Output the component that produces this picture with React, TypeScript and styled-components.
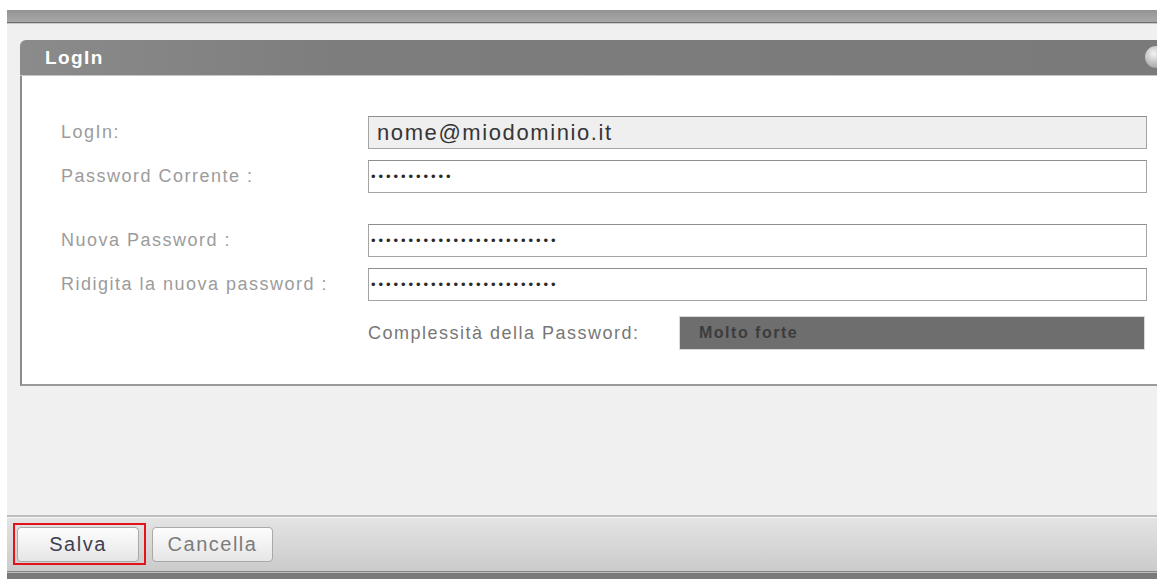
import styled, { createGlobalStyle } from 'styled-components';

const GlobalStyle = createGlobalStyle`
  html, body {
    margin: 0;
    padding: 0;
    background: #fff;
    overflow: hidden;
  }
  body {
    font-family: "Liberation Sans", Arial, sans-serif;
  }
`;

const Page = styled.div`
  width: 1157px;
  height: 579px;
  padding: 10px 0 0 7px;
  box-sizing: border-box;
  background: #fff;
  overflow: hidden;
`;

const Window = styled.div`
  height: 100%;
  display: flex;
  flex-direction: column;
  background: #f0f0f0;
`;

const TitleStrip = styled.div`
  height: 12px;
  flex-shrink: 0;
  background: linear-gradient(#949494, #a8a8a8);
  border-bottom: 1px solid #6f6f6f;
  box-shadow: 0 1px 0 #c9c9c9;
`;

const Content = styled.div`
  flex: 1;
  padding: 17px 0 0 13px;
  overflow: hidden;
`;

const Panel = styled.section`
  width: 1160px;
`;

const PanelHeader = styled.header`
  position: relative;
  height: 35px;
  display: flex;
  align-items: center;
  padding-left: 25px;
  border-radius: 6px 6px 0 0;
  background: linear-gradient(90deg, #8b8b8b 0, #7d7d7d 320px, #7a7a7a 100%);
  border-bottom: 1px solid #c6c6c6;
  color: #fff;
  font-size: 19px;
  font-weight: bold;
  letter-spacing: 1.4px;
`;

const CloseKnob = styled.span`
  position: absolute;
  left: 1125px;
  top: 6px;
  width: 22px;
  height: 22px;
  border-radius: 50%;
  background: radial-gradient(circle at 40% 35%, #f4f4f4 0, #c4c4c4 45%, #8e8e8e 100%);
`;

const PanelBody = styled.div`
  background: #fff;
  border-left: 2px solid #8c8c8c;
  border-bottom: 2px solid #9a9a9a;
  padding: 40px 0 34px 39px;
`;

const Field = styled.div<{ $gap?: number }>`
  display: grid;
  grid-template-columns: 307px 779px;
  align-items: center;
  margin-top: ${(p) => p.$gap ?? 0}px;
`;

const Label = styled.label<{ $dark?: boolean }>`
  font-size: 18px;
  letter-spacing: 1.5px;
  color: ${(p) => (p.$dark ? '#777' : '#9c9c9c')};
  white-space: nowrap;
`;

const Input = styled.div<{ $readOnly?: boolean }>`
  height: 33px;
  box-sizing: border-box;
  display: flex;
  align-items: center;
  border: 1px solid #a4a4a4;
  border-top-color: #8e8e8e;
  background: ${(p) => (p.$readOnly ? '#efefef' : '#fff')};
  padding-left: ${(p) => (p.$readOnly ? 8 : 2)}px;
`;

const Value = styled.span`
  font-size: 22px;
  letter-spacing: 1.6px;
  color: #363636;
`;

const Dots = styled.span`
  font-size: 13px;
  letter-spacing: 2.95px;
  color: #2a2a2a;
  line-height: 1;
`;

const StrengthRow = styled.div`
  display: grid;
  grid-template-columns: 311px 466px;
  align-items: center;
`;

const Meter = styled.div`
  height: 34px;
  box-sizing: border-box;
  display: flex;
  align-items: center;
  padding-left: 19px;
  background: #6e6e6e;
  border: 1px solid #dadada;
  color: #3c3c3c;
  font-size: 16px;
  font-weight: bold;
  letter-spacing: 1.5px;
`;

const Toolbar = styled.footer`
  height: 54px;
  flex-shrink: 0;
  display: flex;
  align-items: center;
  gap: 6px;
  padding-left: 6px;
  border-top: 2px solid #bdbdbd;
  border-bottom: 1px solid #858585;
  background: linear-gradient(#e4e4e4, #cbcbcb);
  box-shadow: inset 0 1px 0 #f6f6f6, 0 1px 0 #bcbcbc;
`;

const Highlight = styled.span`
  display: inline-flex;
  padding: 2px 5px 1px 2px;
  border: 2px solid #e5121a;
`;

const Button = styled.button<{ $muted?: boolean }>`
  width: ${(p) => (p.$muted ? 121 : 122)}px;
  height: 35px;
  border: 1px solid #a9a9a9;
  border-radius: 4px;
  background: linear-gradient(#fdfdfd, #e6e6e6);
  font-family: "Liberation Sans", Arial, sans-serif;
  font-size: 20px;
  letter-spacing: 1.5px;
  color: ${(p) => (p.$muted ? '#7c7c7c' : '#3e3f52')};
  padding: 0;
  cursor: pointer;
`;

const BottomStrip = styled.div`
  height: 6px;
  flex-shrink: 0;
  margin-top: 1px;
  background: #7a7a7a;
`;

const bullets = (n: number) => '•'.repeat(n);

export default function App() {
  return (
    <>
      <GlobalStyle />
      <Page>
        <Window>
          <TitleStrip />
          <Content>
            <Panel>
              <PanelHeader>
                LogIn
                <CloseKnob />
              </PanelHeader>
              <PanelBody>
                <Field>
                  <Label>LogIn:</Label>
                  <Input $readOnly>
                    <Value>nome@miodominio.it</Value>
                  </Input>
                </Field>
                <Field $gap={11}>
                  <Label>Password Corrente :</Label>
                  <Input>
                    <Dots>{bullets(11)}</Dots>
                  </Input>
                </Field>
                <Field $gap={31}>
                  <Label>Nuova Password :</Label>
                  <Input>
                    <Dots>{bullets(25)}</Dots>
                  </Input>
                </Field>
                <Field $gap={11}>
                  <Label>Ridigita la nuova password :</Label>
                  <Input>
                    <Dots>{bullets(25)}</Dots>
                  </Input>
                </Field>
                <Field $gap={15}>
                  <span />
                  <StrengthRow>
                    <Label $dark>Complessità della Password:</Label>
                    <Meter>Molto forte</Meter>
                  </StrengthRow>
                </Field>
              </PanelBody>
            </Panel>
          </Content>
          <Toolbar>
            <Highlight>
              <Button>Salva</Button>
            </Highlight>
            <Button $muted>Cancella</Button>
          </Toolbar>
          <BottomStrip />
        </Window>
      </Page>
    </>
  );
}
